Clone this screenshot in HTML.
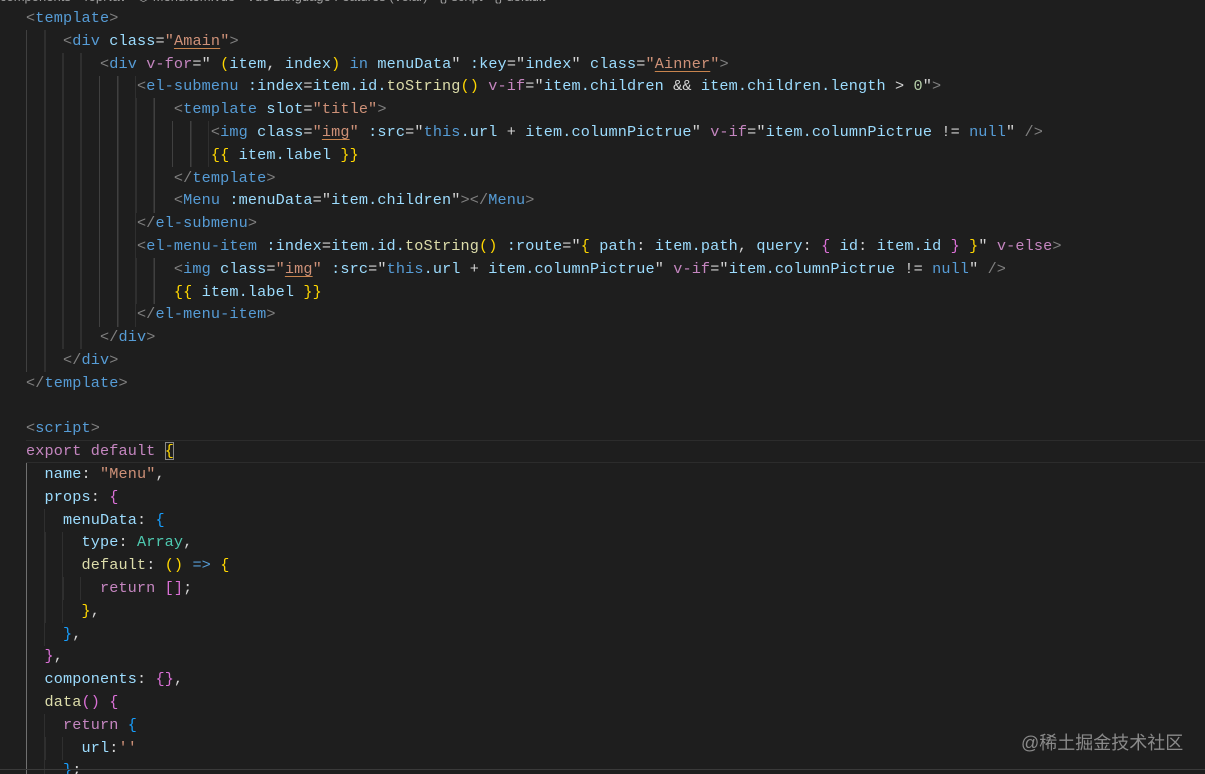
<!DOCTYPE html>
<html><head><meta charset="utf-8"><style>
html,body{margin:0;padding:0;background:#1e1e1e;width:1205px;height:774px;overflow:hidden;position:relative}
.ln{position:absolute;left:26px;height:22.8px;line-height:22.8px;font-family:"Liberation Mono",monospace;font-size:15.2px;letter-spacing:0.13px;white-space:pre;color:#d4d4d4}
.g{position:absolute;left:26px;height:22.8px;background:repeating-linear-gradient(to right,#404040 0 1px,transparent 1px 18.25px)}
.p{color:#808080}.t{color:#569cd6}.a{color:#9cdcfe}.s{color:#ce9178}.k{color:#c586c0}.b{color:#569cd6}
.y{color:#ffd700}.m{color:#da70d6}.l{color:#179fff}.f{color:#dcdcaa}.n{color:#b5cea8}.c{color:#4ec9b0}
.u{text-decoration:underline;text-decoration-color:#c8844e;text-underline-offset:3px}
.bc{position:absolute;left:0;top:-11px;font-family:"Liberation Sans",sans-serif;font-size:13px;color:#a0a0a0;white-space:pre}
.cur{position:absolute;left:26px;right:0;top:440px;height:21px;border-top:1px solid #2c2c2c;border-bottom:1px solid #2c2c2c}
.wm{position:absolute;left:1021px;top:729px;font-family:"Liberation Sans","Noto Sans CJK SC",sans-serif;font-size:18px;color:#8a8a8a}
.bot{position:absolute;left:0;right:0;top:769px;height:1px;background:#3a3a3a}
</style></head><body>
<div class="bc">components › TopNav › ⬡ MenuItem.vue › Vue Language Features (Volar) › {} script › {} default</div>
<div class="cur"></div>

<div class="g" style="top:30px;width:36px"></div>
<div class="g" style="top:53px;width:73px"></div>
<div class="g" style="top:76px;width:110px"></div>
<div class="g" style="top:98px;width:146px"></div>
<div class="g" style="top:121px;width:183px"></div>
<div class="g" style="top:144px;width:183px"></div>
<div class="g" style="top:167px;width:146px"></div>
<div class="g" style="top:190px;width:146px"></div>
<div class="g" style="top:212px;width:110px"></div>
<div class="g" style="top:235px;width:110px"></div>
<div class="g" style="top:258px;width:146px"></div>
<div class="g" style="top:281px;width:146px"></div>
<div class="g" style="top:304px;width:110px"></div>
<div class="g" style="top:326px;width:73px"></div>
<div class="g" style="top:349px;width:36px"></div>

<div class="g" style="top:509px;width:19px"></div>
<div class="g" style="top:532px;width:37px"></div>
<div class="g" style="top:555px;width:37px"></div>
<div class="g" style="top:577px;width:55px"></div>
<div class="g" style="top:600px;width:37px"></div>
<div class="g" style="top:623px;width:19px"></div>
<div class="g" style="top:714px;width:19px"></div>
<div class="g" style="top:737px;width:37px"></div>
<div class="g" style="top:760px;width:19px"></div>
<div style="position:absolute;left:26px;top:463px;width:1px;height:311px;background:#707070"></div>

<div class="ln" style="top:7px"><span class="p">&lt;</span><span class="t">template</span><span class="p">&gt;</span></div>
<div class="ln" style="top:29.8px">    <span class="p">&lt;</span><span class="t">div</span> <span class="a">class</span>=<span class="s">"<span class="u">Amain</span>"</span><span class="p">&gt;</span></div>
<div class="ln" style="top:52.6px">        <span class="p">&lt;</span><span class="t">div</span> <span class="k">v-for</span>=" <span class="y">(</span><span class="a">item</span>, <span class="a">index</span><span class="y">)</span> <span class="b">in</span> <span class="a">menuData</span>" <span class="a">:key</span>="<span class="a">index</span>" <span class="a">class</span>=<span class="s">"<span class="u">Ainner</span>"</span><span class="p">&gt;</span></div>
<div class="ln" style="top:75.4px">            <span class="p">&lt;</span><span class="t">el-submenu</span> <span class="a">:index</span>=<span class="a">item.id.</span><span class="f">toString</span><span class="y">()</span> <span class="k">v-if</span>="<span class="a">item.children</span> &amp;&amp; <span class="a">item.children.length</span> &gt; <span class="n">0</span>"<span class="p">&gt;</span></div>
<div class="ln" style="top:98.2px">                <span class="p">&lt;</span><span class="t">template</span> <span class="a">slot</span>=<span class="s">"title"</span><span class="p">&gt;</span></div>
<div class="ln" style="top:121px">                    <span class="p">&lt;</span><span class="t">img</span> <span class="a">class</span>=<span class="s">"<span class="u">img</span>"</span> <span class="a">:src</span>="<span class="b">this</span><span class="a">.url</span> + <span class="a">item.columnPictrue</span>" <span class="k">v-if</span>="<span class="a">item.columnPictrue</span> != <span class="b">null</span>" <span class="p">/&gt;</span></div>
<div class="ln" style="top:143.8px">                    <span class="y">{{</span> <span class="a">item.label</span> <span class="y">}}</span></div>
<div class="ln" style="top:166.6px">                <span class="p">&lt;/</span><span class="t">template</span><span class="p">&gt;</span></div>
<div class="ln" style="top:189.4px">                <span class="p">&lt;</span><span class="t">Menu</span> <span class="a">:menuData</span>="<span class="a">item.children</span>"<span class="p">&gt;&lt;/</span><span class="t">Menu</span><span class="p">&gt;</span></div>
<div class="ln" style="top:212.2px">            <span class="p">&lt;/</span><span class="t">el-submenu</span><span class="p">&gt;</span></div>
<div class="ln" style="top:235px">            <span class="p">&lt;</span><span class="t">el-menu-item</span> <span class="a">:index</span>=<span class="a">item.id.</span><span class="f">toString</span><span class="y">()</span> <span class="a">:route</span>="<span class="y">{</span> <span class="a">path</span>: <span class="a">item.path</span>, <span class="a">query</span>: <span class="m">{</span> <span class="a">id</span>: <span class="a">item.id</span> <span class="m">}</span> <span class="y">}</span>" <span class="k">v-else</span><span class="p">&gt;</span></div>
<div class="ln" style="top:257.8px">                <span class="p">&lt;</span><span class="t">img</span> <span class="a">class</span>=<span class="s">"<span class="u">img</span>"</span> <span class="a">:src</span>="<span class="b">this</span><span class="a">.url</span> + <span class="a">item.columnPictrue</span>" <span class="k">v-if</span>="<span class="a">item.columnPictrue</span> != <span class="b">null</span>" <span class="p">/&gt;</span></div>
<div class="ln" style="top:280.6px">                <span class="y">{{</span> <span class="a">item.label</span> <span class="y">}}</span></div>
<div class="ln" style="top:303.4px">            <span class="p">&lt;/</span><span class="t">el-menu-item</span><span class="p">&gt;</span></div>
<div class="ln" style="top:326.2px">        <span class="p">&lt;/</span><span class="t">div</span><span class="p">&gt;</span></div>
<div class="ln" style="top:349px">    <span class="p">&lt;/</span><span class="t">div</span><span class="p">&gt;</span></div>
<div class="ln" style="top:371.8px"><span class="p">&lt;/</span><span class="t">template</span><span class="p">&gt;</span></div>
<div class="ln" style="top:417.4px"><span class="p">&lt;</span><span class="t">script</span><span class="p">&gt;</span></div>
<div class="ln" style="top:440.2px"><span class="k">export</span> <span class="k">default</span> <span class="y" style="outline:1px solid #888;outline-offset:-1px">{</span></div>
<div class="ln" style="top:463px">  <span class="a">name</span>: <span class="s">"Menu"</span>,</div>
<div class="ln" style="top:485.8px">  <span class="a">props</span>: <span class="m">{</span></div>
<div class="ln" style="top:508.6px">    <span class="a">menuData</span>: <span class="l">{</span></div>
<div class="ln" style="top:531.4px">      <span class="a">type</span>: <span class="c">Array</span>,</div>
<div class="ln" style="top:554.2px">      <span class="f">default</span>: <span class="y">()</span> <span class="b">=&gt;</span> <span class="y">{</span></div>
<div class="ln" style="top:577px">        <span class="k">return</span> <span class="m">[]</span>;</div>
<div class="ln" style="top:599.8px">      <span class="y">}</span>,</div>
<div class="ln" style="top:622.6px">    <span class="l">}</span>,</div>
<div class="ln" style="top:645.4px">  <span class="m">}</span>,</div>
<div class="ln" style="top:668.2px">  <span class="a">components</span>: <span class="m">{}</span>,</div>
<div class="ln" style="top:691px">  <span class="f">data</span><span class="m">()</span> <span class="m">{</span></div>
<div class="ln" style="top:713.8px">    <span class="k">return</span> <span class="l">{</span></div>
<div class="ln" style="top:736.6px">      <span class="a">url</span>:<span class="s">''</span></div>
<div class="ln" style="top:759.4px">    <span class="l">}</span>;</div>
<div class="bot"></div>
<div class="wm">@稀土掘金技术社区</div>
</body></html>
